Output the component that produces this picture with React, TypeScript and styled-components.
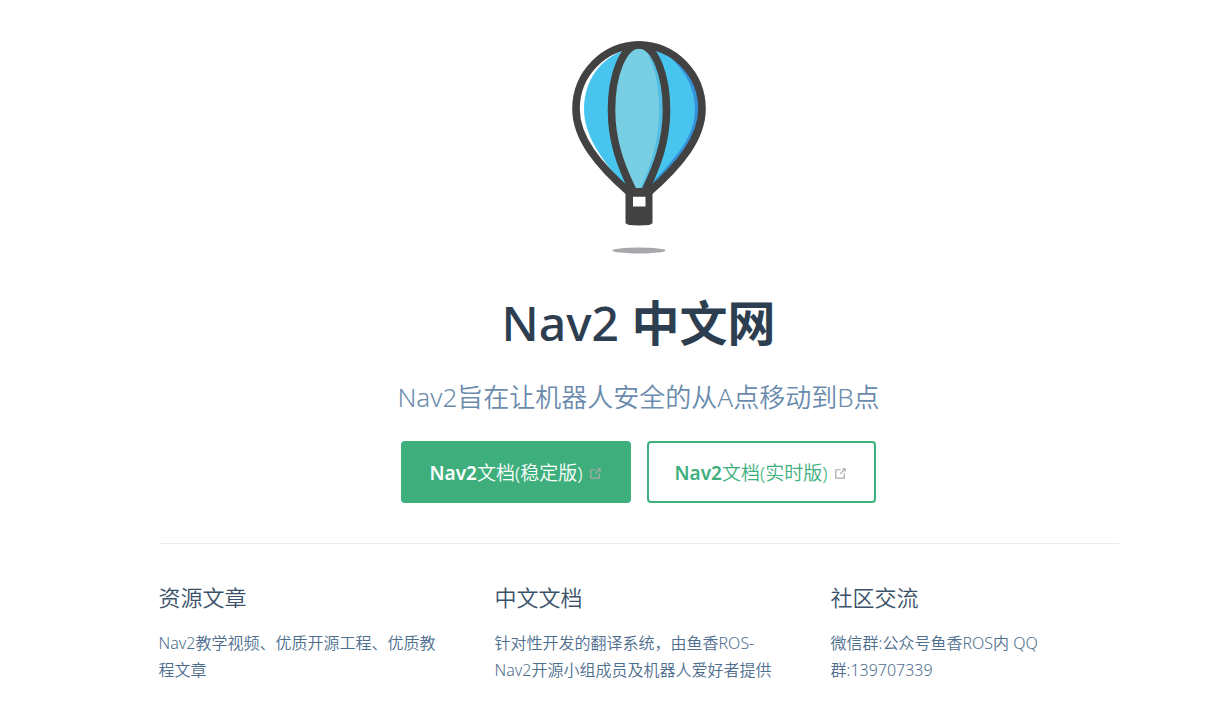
import React from 'react';
import styled, { createGlobalStyle, css } from 'styled-components';

const GlobalStyle = createGlobalStyle`
  *, *::before, *::after { box-sizing: border-box; }
  body {
    margin: 0;
    background: #fff;
    color: #2c3e50;
    font-family: "Noto Sans", "Noto Sans CJK SC", sans-serif;
    font-size: 16px;
    font-weight: 350;
  }
`;

const Page = styled.main`
  padding-left: 70px;
`;

const Home = styled.div`
  max-width: 960px;
  margin: 0 auto;
`;

const Hero = styled.header`
  display: flex;
  flex-direction: column;
  align-items: center;
  padding: 41px 0 40px;
  text-align: center;
`;

const Balloon = styled.svg`
  display: block;
  width: 134px;
  height: 214px;
`;

const Title = styled.h1`
  margin: 38px 0 0;
  font-size: 48px;
  line-height: 60px;
  font-weight: 500;

  strong { font-weight: 700; }
`;

const Tagline = styled.p`
  margin: 26px 0 0;
  color: #6a8bad;
  font-size: 26px;
  line-height: 36px;
`;

const Actions = styled.div`
  display: flex;
  flex-wrap: wrap;
  justify-content: center;
  gap: 16px;
  margin-top: 26px;
`;

const ActionLink = styled.a<{ $primary?: boolean }>`
  display: flex;
  align-items: center;
  padding: 17px 26px 15px;
  border: 2px solid #3eaf7c;
  border-radius: 4px;
  color: #3eaf7c;
  font-size: 19px;
  line-height: 26px;
  text-decoration: none;

  b { font-weight: 600; }

  ${({ $primary }) => $primary && css`
    background: #3eaf7c;
    color: #fff;
  `}
`;

const OutboundIcon = styled.svg`
  width: 15px;
  height: 15px;
  margin-left: 5px;
  color: #aaa;
`;

const Features = styled.section`
  display: grid;
  grid-template-columns: repeat(3, 1fr);
  gap: 48px;
  padding: 36px 0;
  border-top: 1px solid #eaecef;
`;

const FeatureTitle = styled.h2`
  margin: 0 0 16px;
  color: #3a5169;
  font-size: 22px;
  line-height: 34px;
  font-weight: 350;
`;

const FeatureText = styled.p`
  margin: 0;
  color: #4e6e8e;
  line-height: 27px;
`;

const features = [
  { title: '资源文章', text: 'Nav2教学视频、优质开源工程、优质教程文章' },
  { title: '中文文档', text: '针对性开发的翻译系统，由鱼香ROS-Nav2开源小组成员及机器人爱好者提供' },
  { title: '社区交流', text: '微信群:公众号鱼香ROS内 QQ群:139707339' },
];

const Outbound = () => (
  <OutboundIcon viewBox="0 0 100 100" aria-hidden="true">
    <path
      fill="currentColor"
      d="M18.8,85.1h56l0,0c2.2,0,4-1.8,4-4v-32h-8v28h-48v-48h28v-8h-32l0,0c-2.2,0-4,1.8-4,4v56C14.8,83.3,16.6,85.1,18.8,85.1z"
    />
    <polygon
      fill="currentColor"
      points="45.7,48.7 51.3,54.3 77.2,28.5 77.2,37.2 85.2,37.2 85.2,14.9 62.8,14.9 62.8,22.9 71.5,22.9"
    />
  </OutboundIcon>
);

const BalloonLogo = () => (
  <Balloon viewBox="572 41 134 214" role="img" aria-label="Nav2">
    <path fill="#fff" d="M639 45C604 45 576 74 576 109C576 138 598 165 630 193H648C680 165 702 138 702 109C702 74 674 45 639 45Z" />
    <path fill="#48c5ef" d="M625 50C601 58 584 80 584 109C584 134 600 160 630 191H645C677 162 698 137 698 109C698 80 677 55 653 49Z" />
    <path fill="#3491d8" d="M672 59C687 73 695 91 695 109C695 136 677 157 648 187L652 189C680 162 700 137 700 109C700 87 689 69 672 59Z" />
    <path fill="#78cfe4" d="M639 47C624 47 612 75 612 110C612 142 623 168 637 189H641C655 168 667 142 667 110C667 75 654 47 639 47Z" />
    <path fill="#53bde3" d="M648 55C656 70 659 88 659 110C659 143 650 168 640 189H643C656 167 667 142 667 110C667 82 658 61 648 55Z" />
    <g fill="none" stroke="#424242" strokeWidth="7.6">
      <path d="M639 45C604 45 576 74 576 109C576 138 598 165 630 193H648C680 165 702 138 702 109C702 74 674 45 639 45Z" />
      <path d="M639 45C623 45 611.500 75 611.500 110C611.500 142 621 166 633 191M639 45C655 45 666.500 75 666.500 110C666.500 142 657 166 645 191" />
    </g>
    <path fill="#424242" fillRule="evenodd" d="M625.500 188H652.500V223Q652 225.500 639 225.500T625.500 223ZM633 195.500V206.500H645.500V195.500Z" />
    <ellipse cx="639" cy="250.500" rx="26.500" ry="3" fill="#a7a8ab" />
  </Balloon>
);

export default function App() {
  return (
    <>
      <GlobalStyle />
      <Page>
        <Home lang="zh-CN">
          <Hero>
            <BalloonLogo />
            <Title>Nav2 <strong>中文网</strong></Title>
            <Tagline>Nav2旨在让机器人安全的从A点移动到B点</Tagline>
            <Actions>
              <ActionLink href="#stable" $primary>
                <span><b>Nav2</b>文档(稳定版)</span>
                <Outbound />
              </ActionLink>
              <ActionLink href="#latest">
                <span><b>Nav2</b>文档(实时版)</span>
                <Outbound />
              </ActionLink>
            </Actions>
          </Hero>
          <Features>
            {features.map(({ title, text }) => (
              <article key={title}>
                <FeatureTitle>{title}</FeatureTitle>
                <FeatureText>{text}</FeatureText>
              </article>
            ))}
          </Features>
        </Home>
      </Page>
    </>
  );
}
